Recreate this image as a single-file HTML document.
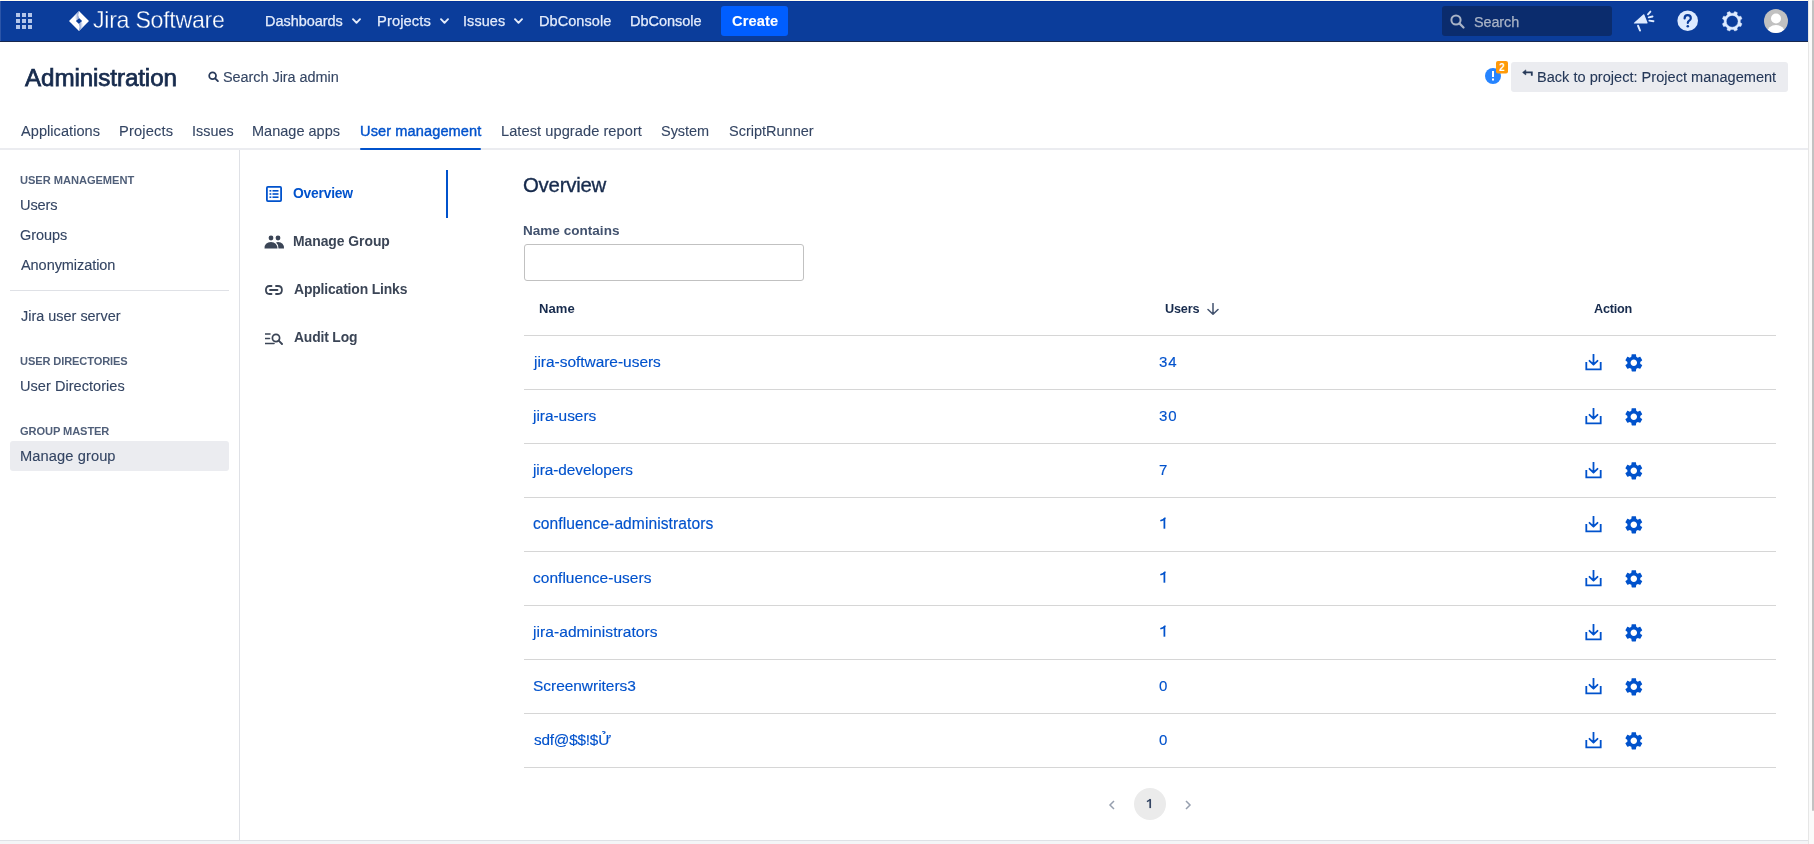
<!DOCTYPE html>
<html><head><meta charset="utf-8"><title>Jira Administration</title>
<style>
html,body{margin:0;padding:0;width:1814px;height:844px;overflow:hidden;background:#fff;}
body{position:relative;font-family:"Liberation Sans", sans-serif;}
.t{position:absolute;line-height:1;white-space:nowrap;will-change:transform;}
.r{position:absolute;display:block;}
</style></head><body>
<div class="r" style="left:0px;top:0px;width:1814px;height:1px;background:#FFFDF0;"></div>
<div class="r" style="left:1808px;top:0px;width:1px;height:844px;background:#E6E6E6;"></div>
<div class="r" style="left:1809px;top:0px;width:5px;height:844px;background:#FAFAFA;"></div>
<div class="r" style="left:1812px;top:0px;width:2px;height:811px;background:#C2C2C2;border-radius:1px"></div>
<div class="r" style="left:0px;top:1px;width:1808px;height:40px;background:#0B3D9B;"></div>
<div class="r" style="left:0px;top:1px;width:1808px;height:1px;background:#03339A;"></div>
<div class="r" style="left:0px;top:1px;width:1px;height:40px;background:#2C55A8;"></div>
<div class="r" style="left:0px;top:41px;width:1808px;height:1px;background:#18284E;"></div>
<svg class="r" style="left:16px;top:13px;" width="16" height="16" viewBox="0 0 16 16"><rect x="0" y="0" width="4" height="4" fill="#B4C6EA"/><rect x="0" y="6" width="4" height="4" fill="#B4C6EA"/><rect x="0" y="12" width="4" height="4" fill="#B4C6EA"/><rect x="6" y="0" width="4" height="4" fill="#B4C6EA"/><rect x="6" y="6" width="4" height="4" fill="#B4C6EA"/><rect x="6" y="12" width="4" height="4" fill="#B4C6EA"/><rect x="12" y="0" width="4" height="4" fill="#B4C6EA"/><rect x="12" y="6" width="4" height="4" fill="#B4C6EA"/><rect x="12" y="12" width="4" height="4" fill="#B4C6EA"/></svg>
<svg class="r" style="left:69px;top:10.8px;" width="20" height="20" viewBox="0 0 20 20"><defs><linearGradient id="lg1" gradientUnits="userSpaceOnUse" x1="9.4" y1="4" x2="4.6" y2="4"><stop offset="0" stop-color="#7D96CE"/><stop offset="1" stop-color="#FFFFFF" stop-opacity="0"/></linearGradient><linearGradient id="lg2" gradientUnits="userSpaceOnUse" x1="10.6" y1="16" x2="15.4" y2="16"><stop offset="0" stop-color="#7D96CE"/><stop offset="1" stop-color="#FFFFFF" stop-opacity="0"/></linearGradient></defs><path d="M10 0 L20 10 L10 20 L0 10 Z M10 6.9 L6.9 10 L10 13.1 L13.1 10 Z" fill="#fff" fill-rule="evenodd"/><path d="M10 0.2 Q8.6 3.5 9.9 6.9 L7.5 9.3 L4.6 5.4 Z" fill="url(#lg1)"/><path d="M10 19.8 Q11.4 16.5 10.1 13.1 L12.5 10.7 L15.4 14.6 Z" fill="url(#lg2)"/></svg>
<div class="t" style="left:93.30px;top:9.00px;font-size:23.2px;letter-spacing:-0.283px;color:#FFFFFF;font-weight:400;-webkit-text-stroke:0.3px #0B3D9B">Jira Software</div>
<div class="t" style="left:265.30px;top:14.00px;font-size:14.47px;letter-spacing:-0.033px;color:#E4ECFB;font-weight:400;-webkit-text-stroke:0.25px #E4ECFB">Dashboards</div>
<svg class="r" style="left:351.5px;top:17.5px;" width="9" height="7" viewBox="0 0 9 7"><path d="M1 1.2 L4.5 4.8 L8 1.2" fill="none" stroke="#E4ECFB" stroke-width="1.9" stroke-linecap="round" stroke-linejoin="round"/></svg>
<div class="t" style="left:376.70px;top:14.00px;font-size:14.73px;letter-spacing:0.086px;color:#E4ECFB;font-weight:400;-webkit-text-stroke:0.25px #E4ECFB">Projects</div>
<svg class="r" style="left:439.5px;top:17.5px;" width="9" height="7" viewBox="0 0 9 7"><path d="M1 1.2 L4.5 4.8 L8 1.2" fill="none" stroke="#E4ECFB" stroke-width="1.9" stroke-linecap="round" stroke-linejoin="round"/></svg>
<div class="t" style="left:463.30px;top:14.00px;font-size:14.41px;letter-spacing:0.1px;color:#E4ECFB;font-weight:400;-webkit-text-stroke:0.25px #E4ECFB">Issues</div>
<svg class="r" style="left:513.5px;top:17.5px;" width="9" height="7" viewBox="0 0 9 7"><path d="M1 1.2 L4.5 4.8 L8 1.2" fill="none" stroke="#E4ECFB" stroke-width="1.9" stroke-linecap="round" stroke-linejoin="round"/></svg>
<div class="t" style="left:538.50px;top:14.00px;font-size:14.54px;letter-spacing:0.05px;color:#E4ECFB;font-weight:400;-webkit-text-stroke:0.25px #E4ECFB">DbConsole</div>
<div class="t" style="left:629.70px;top:14.00px;font-size:14.55px;letter-spacing:-0.062px;color:#E4ECFB;font-weight:400;-webkit-text-stroke:0.25px #E4ECFB">DbConsole</div>
<div class="r" style="left:721px;top:6px;width:67px;height:30px;background:#005EFF;border-radius:3px"></div>
<div class="t" style="left:731.60px;top:14.00px;font-size:14.6px;letter-spacing:0.12px;color:#FFFFFF;font-weight:700;-webkit-text-stroke:0.1px #FFFFFF">Create</div>
<div class="r" style="left:1442px;top:6px;width:170px;height:30px;background:#0B2C6D;border-radius:3px"></div>
<svg class="r" style="left:1450px;top:14px;" width="15" height="15" viewBox="0 0 15 15"><circle cx="6" cy="6" r="4.6" fill="none" stroke="#A9B3C6" stroke-width="2"/><path d="M9.4 9.4 L13.5 13.5" stroke="#A9B3C6" stroke-width="2.2" stroke-linecap="round"/></svg>
<div class="t" style="left:1473.70px;top:15.00px;font-size:14.42px;letter-spacing:-0.1px;color:#A9B3C6;font-weight:400;-webkit-text-stroke:0.25px #A9B3C6">Search</div>
<svg class="r" style="left:1633px;top:10px;" width="22" height="22" viewBox="0 0 22 22"><path d="M1.6 12.3 L10.5 4.3 Q11 3.9 11.3 4.5 L14.6 12.8 Q14.8 13.5 14 13.5 L1.6 13.5 Q0.6 13.5 0.9 12.9 Z" fill="#DEEBFF"/><path d="M5.1 15.8 L7 20.5" stroke="#DEEBFF" stroke-width="2" stroke-linecap="round"/><path d="M15 4.4 L17.4 1.6 M15.7 7.4 L19.5 6.5 M16.4 10.6 L20.5 11.2" stroke="#DEEBFF" stroke-width="1.9" stroke-linecap="round"/></svg>
<svg class="r" style="left:1677px;top:10px;" width="22" height="22" viewBox="0 0 22 22"><circle cx="10.7" cy="10.8" r="10.3" fill="#DEEBFF"/><path d="M7.6 8.4 Q7.6 5.2 10.7 5.2 Q13.8 5.2 13.8 8.2 Q13.8 10 11.8 11 Q10.8 11.6 10.8 13" fill="none" stroke="#0B3D9B" stroke-width="2.2" stroke-linecap="round"/><circle cx="10.8" cy="16.3" r="1.3" fill="#0B3D9B"/></svg>
<svg class="r" style="left:1721.8px;top:10.7px;" width="21" height="21" viewBox="0 0 21 21"><path d="M18.30 11.57 L19.99 12.80 L18.89 15.45 L16.82 15.13 L15.03 16.92 L15.35 18.99 L12.70 20.09 L11.47 18.40 L8.93 18.40 L7.70 20.09 L5.05 18.99 L5.37 16.92 L3.58 15.13 L1.51 15.45 L0.41 12.80 L2.10 11.57 L2.10 9.03 L0.41 7.80 L1.51 5.15 L3.58 5.47 L5.37 3.68 L5.05 1.61 L7.70 0.51 L8.93 2.20 L11.47 2.20 L12.70 0.51 L15.35 1.61 L15.03 3.68 L16.82 5.47 L18.89 5.15 L19.99 7.80 L18.30 9.03 Z M10.2 4.4 A5.9 5.9 0 1 0 10.2 16.2 A5.9 5.9 0 1 0 10.2 4.4 Z" fill="#DEEBFF" fill-rule="evenodd" stroke="#DEEBFF" stroke-width="0.4" stroke-linejoin="round"/></svg>
<svg class="r" style="left:1764px;top:9px;" width="24" height="24" viewBox="0 0 24 24"><defs><clipPath id="avc"><circle cx="12" cy="12" r="12"/></clipPath></defs><circle cx="12" cy="12" r="12" fill="#C1C1C1"/><g clip-path="url(#avc)"><circle cx="12" cy="9.5" r="5" fill="#fff"/><ellipse cx="12" cy="24" rx="9" ry="8" fill="#fff"/></g></svg>
<div class="t" style="left:25.30px;top:66.00px;font-size:24.22px;letter-spacing:-0.115px;color:#172B4D;font-weight:400;-webkit-text-stroke:0.75px #172B4D">Administration</div>
<svg class="r" style="left:207.8px;top:71.2px;" width="12" height="12" viewBox="0 0 12 12"><circle cx="4.6" cy="4.8" r="3.4" fill="none" stroke="#283A5A" stroke-width="1.75"/><path d="M7.1 7.3 L9.9 10.1" stroke="#283A5A" stroke-width="1.9" stroke-linecap="round"/></svg>
<div class="t" style="left:223.00px;top:70.00px;font-size:14.46px;letter-spacing:-0.044px;color:#344563;font-weight:400;-webkit-text-stroke:0.12px #344563">Search Jira admin</div>
<svg class="r" style="left:1484px;top:60px;" width="25" height="26" viewBox="0 0 25 26"><circle cx="9" cy="16" r="8" fill="#2684FF"/><rect x="8" y="11" width="2" height="6" fill="#fff"/><rect x="8" y="18.5" width="2" height="2" fill="#fff"/><rect x="12" y="1" width="12" height="12.5" rx="2" fill="#FF9A0A"/><text x="18" y="11" font-family="Liberation Sans" font-size="10" font-weight="700" fill="#fff" text-anchor="middle">2</text></svg>
<div class="r" style="left:1511px;top:62px;width:277px;height:30px;background:#EBECF0;border-radius:3px"></div>
<svg class="r" style="left:1522px;top:69px;" width="12" height="8" viewBox="0 0 12 8"><path d="M2.5 3.4 L9.8 3.4 L9.8 6.8" fill="none" stroke="#253858" stroke-width="1.8"/><path d="M0.6 3.4 L3.8 0.9 L3.8 5.9 Z" fill="#253858" stroke="#253858" stroke-width="0.6" stroke-linejoin="round"/></svg>
<div class="t" style="left:1537.10px;top:70.00px;font-size:14.55px;letter-spacing:0.018px;color:#253858;font-weight:400;-webkit-text-stroke:0.1px #253858">Back to project: Project management</div>
<div class="r" style="left:0px;top:148px;width:1808px;height:2px;background:#EBECF0;"></div>
<div class="t" style="left:20.60px;top:124.00px;font-size:14.56px;letter-spacing:0.055px;color:#344563;font-weight:400;-webkit-text-stroke:0.1px #344563">Applications</div>
<div class="t" style="left:118.80px;top:124.00px;font-size:14.67px;letter-spacing:0.171px;color:#344563;font-weight:400;-webkit-text-stroke:0.1px #344563">Projects</div>
<div class="t" style="left:191.60px;top:124.00px;font-size:14.36px;letter-spacing:0.04px;color:#344563;font-weight:400;-webkit-text-stroke:0.1px #344563">Issues</div>
<div class="t" style="left:252.40px;top:124.00px;font-size:14.51px;letter-spacing:0.01px;color:#344563;font-weight:400;-webkit-text-stroke:0.1px #344563">Manage apps</div>
<div class="t" style="left:500.60px;top:124.00px;font-size:14.62px;letter-spacing:0.06px;color:#344563;font-weight:400;-webkit-text-stroke:0.1px #344563">Latest upgrade report</div>
<div class="t" style="left:661.40px;top:124.00px;font-size:14.48px;letter-spacing:-0.02px;color:#344563;font-weight:400;-webkit-text-stroke:0.1px #344563">System</div>
<div class="t" style="left:729.30px;top:124.00px;font-size:14.5px;letter-spacing:0.0px;color:#344563;font-weight:400;-webkit-text-stroke:0.1px #344563">ScriptRunner</div>
<div class="t" style="left:359.60px;top:124.00px;font-size:14.59px;letter-spacing:0.1px;color:#0052CC;font-weight:400;-webkit-text-stroke:0.4px #0052CC">User management</div>
<div class="r" style="left:360px;top:148px;width:121px;height:2px;background:#0052CC;border-radius:1px"></div>
<div class="r" style="left:239px;top:150px;width:1px;height:690px;background:#DFE1E6;"></div>
<div class="t" style="left:19.50px;top:175.00px;font-size:11.12px;letter-spacing:-0.043px;color:#505F79;font-weight:700;">USER MANAGEMENT</div>
<div class="t" style="left:19.50px;top:198.00px;font-size:14.6px;letter-spacing:-0.125px;color:#344563;font-weight:400;-webkit-text-stroke:0.12px #344563">Users</div>
<div class="t" style="left:19.50px;top:228.00px;font-size:14.48px;letter-spacing:-0.02px;color:#344563;font-weight:400;-webkit-text-stroke:0.12px #344563">Groups</div>
<div class="t" style="left:20.50px;top:258.00px;font-size:14.52px;letter-spacing:-0.067px;color:#344563;font-weight:400;-webkit-text-stroke:0.12px #344563">Anonymization</div>
<div class="r" style="left:10px;top:290px;width:219px;height:1px;background:#DFE1E6;"></div>
<div class="t" style="left:20.50px;top:309.00px;font-size:14.43px;letter-spacing:0.007px;color:#344563;font-weight:400;-webkit-text-stroke:0.12px #344563">Jira user server</div>
<div class="t" style="left:20.40px;top:356.00px;font-size:11.07px;letter-spacing:-0.1px;color:#505F79;font-weight:700;">USER DIRECTORIES</div>
<div class="t" style="left:20.40px;top:379.00px;font-size:14.54px;letter-spacing:0.04px;color:#344563;font-weight:400;-webkit-text-stroke:0.12px #344563">User Directories</div>
<div class="t" style="left:20.40px;top:426.00px;font-size:11.08px;letter-spacing:-0.082px;color:#505F79;font-weight:700;">GROUP MASTER</div>
<div class="r" style="left:10px;top:441px;width:219px;height:30px;background:#EBECF0;border-radius:3px"></div>
<div class="t" style="left:20.40px;top:449.00px;font-size:14.66px;letter-spacing:0.091px;color:#344563;font-weight:400;-webkit-text-stroke:0.12px #344563">Manage group</div>
<svg class="r" style="left:266px;top:186px;" width="16" height="16" viewBox="0 0 16 16"><rect x="0.9" y="0.9" width="14.2" height="14.2" rx="1" fill="none" stroke="#0052CC" stroke-width="1.8"/><rect x="3.5" y="4" width="1.8" height="1.6" fill="#0052CC"/><rect x="6.5" y="4" width="6" height="1.6" fill="#0052CC"/><rect x="3.5" y="7.2" width="1.8" height="1.6" fill="#0052CC"/><rect x="6.5" y="7.2" width="6" height="1.6" fill="#0052CC"/><rect x="3.5" y="10.4" width="1.8" height="1.6" fill="#0052CC"/><rect x="6.5" y="10.4" width="6" height="1.6" fill="#0052CC"/></svg>
<div class="t" style="left:292.50px;top:187.00px;font-size:13.84px;letter-spacing:-0.2px;color:#0052CC;font-weight:700;">Overview</div>
<div class="r" style="left:446px;top:170px;width:2px;height:48px;background:#0052CC;"></div>
<svg class="r" style="left:264px;top:235px;" width="21" height="14" viewBox="0 0 21 14"><circle cx="7" cy="3" r="2.4" fill="#3B4556"/><circle cx="14" cy="3" r="2.4" fill="#3B4556"/><path d="M0.5 13.5 Q0.5 7 7 7 Q13 7 13.5 13.5 Z" fill="#3B4556"/><path d="M12 7.6 Q13 7 14 7 Q20 7 20 13.5 L14.5 13.5 Q14.5 9.5 12 7.6 Z" fill="#3B4556"/></svg>
<div class="t" style="left:292.50px;top:235.00px;font-size:13.9px;letter-spacing:-0.036px;color:#3B4556;font-weight:700;">Manage Group</div>
<svg class="r" style="left:265px;top:285px;" width="18" height="11" viewBox="0 0 18 11"><path d="M6.5 1 L4.5 1 Q0.9 1 0.9 5 Q0.9 9 4.5 9 L6.5 9 M11 1 L13 1 Q16.9 1 16.9 5 Q16.9 9 13 9 L11 9 M5 5 L12.5 5" fill="none" stroke="#3B4556" stroke-width="1.8" stroke-linecap="round"/></svg>
<div class="t" style="left:293.50px;top:283.00px;font-size:13.91px;letter-spacing:-0.156px;color:#3B4556;font-weight:700;">Application Links</div>
<svg class="r" style="left:265px;top:333px;" width="19" height="12" viewBox="0 0 19 12"><path d="M0.5 1 L5 1 M0.5 5.5 L4.5 5.5 M0.5 10.5 L9 10.5" stroke="#3B4556" stroke-width="1.6" stroke-linecap="round"/><circle cx="11" cy="5" r="3.6" fill="none" stroke="#3B4556" stroke-width="1.7"/><path d="M13.7 7.7 L17 11" stroke="#3B4556" stroke-width="1.9" stroke-linecap="round"/></svg>
<div class="t" style="left:293.50px;top:331.00px;font-size:13.87px;letter-spacing:-0.15px;color:#3B4556;font-weight:700;">Audit Log</div>
<div class="t" style="left:523.00px;top:175.00px;font-size:20.41px;letter-spacing:-0.257px;color:#172B4D;font-weight:400;-webkit-text-stroke:0.35px #172B4D">Overview</div>
<div class="t" style="left:523.00px;top:224.00px;font-size:13.52px;letter-spacing:0.025px;color:#42526E;font-weight:700;">Name contains</div>
<div class="r" style="left:524px;top:244px;width:280px;height:37px;box-sizing:border-box;border:1px solid #C1C1C1;border-radius:3px;background:#fff"></div>
<div class="t" style="left:538.80px;top:302.00px;font-size:13.04px;letter-spacing:0.067px;color:#172B4D;font-weight:700;">Name</div>
<div class="t" style="left:1165.00px;top:303.00px;font-size:12.68px;letter-spacing:-0.175px;color:#172B4D;font-weight:700;">Users</div>
<svg class="r" style="left:1206px;top:303px;" width="14" height="12" viewBox="0 0 14 12"><path d="M7 0.5 L7 11 M2 6.5 L7 11.3 L12 6.5" fill="none" stroke="#42526E" stroke-width="1.5" stroke-linecap="round" stroke-linejoin="round"/></svg>
<div class="t" style="left:1594.00px;top:303.00px;font-size:12.65px;letter-spacing:-0.22px;color:#172B4D;font-weight:700;">Action</div>
<div class="r" style="left:524px;top:335px;width:1252px;height:1px;background:#D6D6D6;"></div>
<div class="t" style="left:533.50px;top:354.00px;font-size:15.48px;letter-spacing:-0.022px;color:#0052CC;font-weight:400;-webkit-text-stroke:0.15px #0052CC">jira-software-users</div>
<div class="t" style="left:1159.10px;top:354.00px;font-size:15px;letter-spacing:1.0px;color:#0052CC;-webkit-text-stroke:0.15px #0052CC">34</div>
<svg class="r" style="left:1585px;top:354px;" width="17" height="17" viewBox="0 0 17 17"><path d="M8.5 0.5 L8.5 10.5 M4.5 6.8 L8.5 10.7 L12.5 6.8" fill="none" stroke="#0052CC" stroke-width="1.8" stroke-linecap="round" stroke-linejoin="round"/><path d="M1.3 8 L1.3 15.3 L15.7 15.3 L15.7 8" fill="none" stroke="#0052CC" stroke-width="1.8"/></svg>
<svg class="r" style="left:1622.9px;top:351.6px" width="21.6" height="21.6" viewBox="0 0 24 24"><path fill="#0052CC" d="M19.14,12.94c0.04-0.3,0.06-0.61,0.06-0.94c0-0.32-0.02-0.64-0.07-0.94l2.03-1.58c0.18-0.14,0.23-0.41,0.12-0.61l-1.92-3.32c-0.12-0.22-0.37-0.29-0.59-0.22l-2.39,0.96c-0.5-0.38-1.03-0.7-1.62-0.94L14.4,2.81c-0.04-0.24-0.24-0.41-0.48-0.41h-3.84c-0.24,0-0.43,0.17-0.47,0.41L9.25,5.35C8.66,5.59,8.12,5.92,7.63,6.29L5.24,5.33c-0.22-0.08-0.47,0-0.59,0.22L2.74,8.87C2.62,9.08,2.66,9.34,2.86,9.48l2.03,1.58C4.84,11.36,4.8,11.69,4.8,12s0.02,0.64,0.07,0.94l-2.03,1.58c-0.18,0.14-0.23,0.41-0.12,0.61l1.92,3.32c0.12,0.22,0.37,0.29,0.59,0.22l2.39-0.96c0.5,0.38,1.03,0.7,1.62,0.94l0.36,2.54c0.05,0.24,0.24,0.41,0.48,0.41h3.84c0.24,0,0.44-0.17,0.47-0.41l0.36-2.54c0.59-0.24,1.13-0.56,1.62-0.94l2.39,0.96c0.22,0.08,0.47,0,0.59-0.22l1.92-3.32c0.12-0.22,0.07-0.47-0.12-0.61L19.14,12.94z M12,15.6c-1.98,0-3.6-1.62-3.6-3.6s1.62-3.6,3.6-3.6s3.6,1.62,3.6,3.6S13.98,15.6,12,15.6z"/></svg>
<div class="r" style="left:524px;top:389px;width:1252px;height:1px;background:#D6D6D6;"></div>
<div class="t" style="left:533.30px;top:408.00px;font-size:15.46px;letter-spacing:-0.033px;color:#0052CC;font-weight:400;-webkit-text-stroke:0.15px #0052CC">jira-users</div>
<div class="t" style="left:1159.10px;top:408.00px;font-size:15px;letter-spacing:1.0px;color:#0052CC;-webkit-text-stroke:0.15px #0052CC">30</div>
<svg class="r" style="left:1585px;top:408px;" width="17" height="17" viewBox="0 0 17 17"><path d="M8.5 0.5 L8.5 10.5 M4.5 6.8 L8.5 10.7 L12.5 6.8" fill="none" stroke="#0052CC" stroke-width="1.8" stroke-linecap="round" stroke-linejoin="round"/><path d="M1.3 8 L1.3 15.3 L15.7 15.3 L15.7 8" fill="none" stroke="#0052CC" stroke-width="1.8"/></svg>
<svg class="r" style="left:1622.9px;top:405.6px" width="21.6" height="21.6" viewBox="0 0 24 24"><path fill="#0052CC" d="M19.14,12.94c0.04-0.3,0.06-0.61,0.06-0.94c0-0.32-0.02-0.64-0.07-0.94l2.03-1.58c0.18-0.14,0.23-0.41,0.12-0.61l-1.92-3.32c-0.12-0.22-0.37-0.29-0.59-0.22l-2.39,0.96c-0.5-0.38-1.03-0.7-1.62-0.94L14.4,2.81c-0.04-0.24-0.24-0.41-0.48-0.41h-3.84c-0.24,0-0.43,0.17-0.47,0.41L9.25,5.35C8.66,5.59,8.12,5.92,7.63,6.29L5.24,5.33c-0.22-0.08-0.47,0-0.59,0.22L2.74,8.87C2.62,9.08,2.66,9.34,2.86,9.48l2.03,1.58C4.84,11.36,4.8,11.69,4.8,12s0.02,0.64,0.07,0.94l-2.03,1.58c-0.18,0.14-0.23,0.41-0.12,0.61l1.92,3.32c0.12,0.22,0.37,0.29,0.59,0.22l2.39-0.96c0.5,0.38,1.03,0.7,1.62,0.94l0.36,2.54c0.05,0.24,0.24,0.41,0.48,0.41h3.84c0.24,0,0.44-0.17,0.47-0.41l0.36-2.54c0.59-0.24,1.13-0.56,1.62-0.94l2.39,0.96c0.22,0.08,0.47,0,0.59-0.22l1.92-3.32c0.12-0.22,0.07-0.47-0.12-0.61L19.14,12.94z M12,15.6c-1.98,0-3.6-1.62-3.6-3.6s1.62-3.6,3.6-3.6s3.6,1.62,3.6,3.6S13.98,15.6,12,15.6z"/></svg>
<div class="r" style="left:524px;top:443px;width:1252px;height:1px;background:#D6D6D6;"></div>
<div class="t" style="left:533.30px;top:462.00px;font-size:15.36px;letter-spacing:-0.057px;color:#0052CC;font-weight:400;-webkit-text-stroke:0.15px #0052CC">jira-developers</div>
<div class="t" style="left:1159.10px;top:462.00px;font-size:15px;letter-spacing:1.0px;color:#0052CC;-webkit-text-stroke:0.15px #0052CC">7</div>
<svg class="r" style="left:1585px;top:462px;" width="17" height="17" viewBox="0 0 17 17"><path d="M8.5 0.5 L8.5 10.5 M4.5 6.8 L8.5 10.7 L12.5 6.8" fill="none" stroke="#0052CC" stroke-width="1.8" stroke-linecap="round" stroke-linejoin="round"/><path d="M1.3 8 L1.3 15.3 L15.7 15.3 L15.7 8" fill="none" stroke="#0052CC" stroke-width="1.8"/></svg>
<svg class="r" style="left:1622.9px;top:459.6px" width="21.6" height="21.6" viewBox="0 0 24 24"><path fill="#0052CC" d="M19.14,12.94c0.04-0.3,0.06-0.61,0.06-0.94c0-0.32-0.02-0.64-0.07-0.94l2.03-1.58c0.18-0.14,0.23-0.41,0.12-0.61l-1.92-3.32c-0.12-0.22-0.37-0.29-0.59-0.22l-2.39,0.96c-0.5-0.38-1.03-0.7-1.62-0.94L14.4,2.81c-0.04-0.24-0.24-0.41-0.48-0.41h-3.84c-0.24,0-0.43,0.17-0.47,0.41L9.25,5.35C8.66,5.59,8.12,5.92,7.63,6.29L5.24,5.33c-0.22-0.08-0.47,0-0.59,0.22L2.74,8.87C2.62,9.08,2.66,9.34,2.86,9.48l2.03,1.58C4.84,11.36,4.8,11.69,4.8,12s0.02,0.64,0.07,0.94l-2.03,1.58c-0.18,0.14-0.23,0.41-0.12,0.61l1.92,3.32c0.12,0.22,0.37,0.29,0.59,0.22l2.39-0.96c0.5,0.38,1.03,0.7,1.62,0.94l0.36,2.54c0.05,0.24,0.24,0.41,0.48,0.41h3.84c0.24,0,0.44-0.17,0.47-0.41l0.36-2.54c0.59-0.24,1.13-0.56,1.62-0.94l2.39,0.96c0.22,0.08,0.47,0,0.59-0.22l1.92-3.32c0.12-0.22,0.07-0.47-0.12-0.61L19.14,12.94z M12,15.6c-1.98,0-3.6-1.62-3.6-3.6s1.62-3.6,3.6-3.6s3.6,1.62,3.6,3.6S13.98,15.6,12,15.6z"/></svg>
<div class="r" style="left:524px;top:497px;width:1252px;height:1px;background:#D6D6D6;"></div>
<div class="t" style="left:532.60px;top:516.00px;font-size:15.61px;letter-spacing:0.062px;color:#0052CC;font-weight:400;-webkit-text-stroke:0.15px #0052CC">confluence-administrators</div>
<svg class="r" style="left:1159px;top:516px" width="8" height="14" viewBox="0 0 8 14"><path d="M5.4 2.3 L5.4 12.7" stroke="#0052CC" stroke-width="1.75"/><path d="M2 4.6 Q4.6 3.9 5.9 2.2" fill="none" stroke="#0052CC" stroke-width="1.6" stroke-linecap="round"/></svg>
<svg class="r" style="left:1585px;top:516px;" width="17" height="17" viewBox="0 0 17 17"><path d="M8.5 0.5 L8.5 10.5 M4.5 6.8 L8.5 10.7 L12.5 6.8" fill="none" stroke="#0052CC" stroke-width="1.8" stroke-linecap="round" stroke-linejoin="round"/><path d="M1.3 8 L1.3 15.3 L15.7 15.3 L15.7 8" fill="none" stroke="#0052CC" stroke-width="1.8"/></svg>
<svg class="r" style="left:1622.9px;top:513.6px" width="21.6" height="21.6" viewBox="0 0 24 24"><path fill="#0052CC" d="M19.14,12.94c0.04-0.3,0.06-0.61,0.06-0.94c0-0.32-0.02-0.64-0.07-0.94l2.03-1.58c0.18-0.14,0.23-0.41,0.12-0.61l-1.92-3.32c-0.12-0.22-0.37-0.29-0.59-0.22l-2.39,0.96c-0.5-0.38-1.03-0.7-1.62-0.94L14.4,2.81c-0.04-0.24-0.24-0.41-0.48-0.41h-3.84c-0.24,0-0.43,0.17-0.47,0.41L9.25,5.35C8.66,5.59,8.12,5.92,7.63,6.29L5.24,5.33c-0.22-0.08-0.47,0-0.59,0.22L2.74,8.87C2.62,9.08,2.66,9.34,2.86,9.48l2.03,1.58C4.84,11.36,4.8,11.69,4.8,12s0.02,0.64,0.07,0.94l-2.03,1.58c-0.18,0.14-0.23,0.41-0.12,0.61l1.92,3.32c0.12,0.22,0.37,0.29,0.59,0.22l2.39-0.96c0.5,0.38,1.03,0.7,1.62,0.94l0.36,2.54c0.05,0.24,0.24,0.41,0.48,0.41h3.84c0.24,0,0.44-0.17,0.47-0.41l0.36-2.54c0.59-0.24,1.13-0.56,1.62-0.94l2.39,0.96c0.22,0.08,0.47,0,0.59-0.22l1.92-3.32c0.12-0.22,0.07-0.47-0.12-0.61L19.14,12.94z M12,15.6c-1.98,0-3.6-1.62-3.6-3.6s1.62-3.6,3.6-3.6s3.6,1.62,3.6,3.6S13.98,15.6,12,15.6z"/></svg>
<div class="r" style="left:524px;top:551px;width:1252px;height:1px;background:#D6D6D6;"></div>
<div class="t" style="left:532.60px;top:570.00px;font-size:15.47px;letter-spacing:0.04px;color:#0052CC;font-weight:400;-webkit-text-stroke:0.15px #0052CC">confluence-users</div>
<svg class="r" style="left:1159px;top:570px" width="8" height="14" viewBox="0 0 8 14"><path d="M5.4 2.3 L5.4 12.7" stroke="#0052CC" stroke-width="1.75"/><path d="M2 4.6 Q4.6 3.9 5.9 2.2" fill="none" stroke="#0052CC" stroke-width="1.6" stroke-linecap="round"/></svg>
<svg class="r" style="left:1585px;top:570px;" width="17" height="17" viewBox="0 0 17 17"><path d="M8.5 0.5 L8.5 10.5 M4.5 6.8 L8.5 10.7 L12.5 6.8" fill="none" stroke="#0052CC" stroke-width="1.8" stroke-linecap="round" stroke-linejoin="round"/><path d="M1.3 8 L1.3 15.3 L15.7 15.3 L15.7 8" fill="none" stroke="#0052CC" stroke-width="1.8"/></svg>
<svg class="r" style="left:1622.9px;top:567.6px" width="21.6" height="21.6" viewBox="0 0 24 24"><path fill="#0052CC" d="M19.14,12.94c0.04-0.3,0.06-0.61,0.06-0.94c0-0.32-0.02-0.64-0.07-0.94l2.03-1.58c0.18-0.14,0.23-0.41,0.12-0.61l-1.92-3.32c-0.12-0.22-0.37-0.29-0.59-0.22l-2.39,0.96c-0.5-0.38-1.03-0.7-1.62-0.94L14.4,2.81c-0.04-0.24-0.24-0.41-0.48-0.41h-3.84c-0.24,0-0.43,0.17-0.47,0.41L9.25,5.35C8.66,5.59,8.12,5.92,7.63,6.29L5.24,5.33c-0.22-0.08-0.47,0-0.59,0.22L2.74,8.87C2.62,9.08,2.66,9.34,2.86,9.48l2.03,1.58C4.84,11.36,4.8,11.69,4.8,12s0.02,0.64,0.07,0.94l-2.03,1.58c-0.18,0.14-0.23,0.41-0.12,0.61l1.92,3.32c0.12,0.22,0.37,0.29,0.59,0.22l2.39-0.96c0.5,0.38,1.03,0.7,1.62,0.94l0.36,2.54c0.05,0.24,0.24,0.41,0.48,0.41h3.84c0.24,0,0.44-0.17,0.47-0.41l0.36-2.54c0.59-0.24,1.13-0.56,1.62-0.94l2.39,0.96c0.22,0.08,0.47,0,0.59-0.22l1.92-3.32c0.12-0.22,0.07-0.47-0.12-0.61L19.14,12.94z M12,15.6c-1.98,0-3.6-1.62-3.6-3.6s1.62-3.6,3.6-3.6s3.6,1.62,3.6,3.6S13.98,15.6,12,15.6z"/></svg>
<div class="r" style="left:524px;top:605px;width:1252px;height:1px;background:#D6D6D6;"></div>
<div class="t" style="left:533.30px;top:624.00px;font-size:15.56px;letter-spacing:0.056px;color:#0052CC;font-weight:400;-webkit-text-stroke:0.15px #0052CC">jira-administrators</div>
<svg class="r" style="left:1159px;top:624px" width="8" height="14" viewBox="0 0 8 14"><path d="M5.4 2.3 L5.4 12.7" stroke="#0052CC" stroke-width="1.75"/><path d="M2 4.6 Q4.6 3.9 5.9 2.2" fill="none" stroke="#0052CC" stroke-width="1.6" stroke-linecap="round"/></svg>
<svg class="r" style="left:1585px;top:624px;" width="17" height="17" viewBox="0 0 17 17"><path d="M8.5 0.5 L8.5 10.5 M4.5 6.8 L8.5 10.7 L12.5 6.8" fill="none" stroke="#0052CC" stroke-width="1.8" stroke-linecap="round" stroke-linejoin="round"/><path d="M1.3 8 L1.3 15.3 L15.7 15.3 L15.7 8" fill="none" stroke="#0052CC" stroke-width="1.8"/></svg>
<svg class="r" style="left:1622.9px;top:621.6px" width="21.6" height="21.6" viewBox="0 0 24 24"><path fill="#0052CC" d="M19.14,12.94c0.04-0.3,0.06-0.61,0.06-0.94c0-0.32-0.02-0.64-0.07-0.94l2.03-1.58c0.18-0.14,0.23-0.41,0.12-0.61l-1.92-3.32c-0.12-0.22-0.37-0.29-0.59-0.22l-2.39,0.96c-0.5-0.38-1.03-0.7-1.62-0.94L14.4,2.81c-0.04-0.24-0.24-0.41-0.48-0.41h-3.84c-0.24,0-0.43,0.17-0.47,0.41L9.25,5.35C8.66,5.59,8.12,5.92,7.63,6.29L5.24,5.33c-0.22-0.08-0.47,0-0.59,0.22L2.74,8.87C2.62,9.08,2.66,9.34,2.86,9.48l2.03,1.58C4.84,11.36,4.8,11.69,4.8,12s0.02,0.64,0.07,0.94l-2.03,1.58c-0.18,0.14-0.23,0.41-0.12,0.61l1.92,3.32c0.12,0.22,0.37,0.29,0.59,0.22l2.39-0.96c0.5,0.38,1.03,0.7,1.62,0.94l0.36,2.54c0.05,0.24,0.24,0.41,0.48,0.41h3.84c0.24,0,0.44-0.17,0.47-0.41l0.36-2.54c0.59-0.24,1.13-0.56,1.62-0.94l2.39,0.96c0.22,0.08,0.47,0,0.59-0.22l1.92-3.32c0.12-0.22,0.07-0.47-0.12-0.61L19.14,12.94z M12,15.6c-1.98,0-3.6-1.62-3.6-3.6s1.62-3.6,3.6-3.6s3.6,1.62,3.6,3.6S13.98,15.6,12,15.6z"/></svg>
<div class="r" style="left:524px;top:659px;width:1252px;height:1px;background:#D6D6D6;"></div>
<div class="t" style="left:532.60px;top:678.00px;font-size:15.48px;letter-spacing:-0.023px;color:#0052CC;font-weight:400;-webkit-text-stroke:0.15px #0052CC">Screenwriters3</div>
<div class="t" style="left:1159.10px;top:678.00px;font-size:15px;letter-spacing:1.0px;color:#0052CC;-webkit-text-stroke:0.15px #0052CC">0</div>
<svg class="r" style="left:1585px;top:678px;" width="17" height="17" viewBox="0 0 17 17"><path d="M8.5 0.5 L8.5 10.5 M4.5 6.8 L8.5 10.7 L12.5 6.8" fill="none" stroke="#0052CC" stroke-width="1.8" stroke-linecap="round" stroke-linejoin="round"/><path d="M1.3 8 L1.3 15.3 L15.7 15.3 L15.7 8" fill="none" stroke="#0052CC" stroke-width="1.8"/></svg>
<svg class="r" style="left:1622.9px;top:675.6px" width="21.6" height="21.6" viewBox="0 0 24 24"><path fill="#0052CC" d="M19.14,12.94c0.04-0.3,0.06-0.61,0.06-0.94c0-0.32-0.02-0.64-0.07-0.94l2.03-1.58c0.18-0.14,0.23-0.41,0.12-0.61l-1.92-3.32c-0.12-0.22-0.37-0.29-0.59-0.22l-2.39,0.96c-0.5-0.38-1.03-0.7-1.62-0.94L14.4,2.81c-0.04-0.24-0.24-0.41-0.48-0.41h-3.84c-0.24,0-0.43,0.17-0.47,0.41L9.25,5.35C8.66,5.59,8.12,5.92,7.63,6.29L5.24,5.33c-0.22-0.08-0.47,0-0.59,0.22L2.74,8.87C2.62,9.08,2.66,9.34,2.86,9.48l2.03,1.58C4.84,11.36,4.8,11.69,4.8,12s0.02,0.64,0.07,0.94l-2.03,1.58c-0.18,0.14-0.23,0.41-0.12,0.61l1.92,3.32c0.12,0.22,0.37,0.29,0.59,0.22l2.39-0.96c0.5,0.38,1.03,0.7,1.62,0.94l0.36,2.54c0.05,0.24,0.24,0.41,0.48,0.41h3.84c0.24,0,0.44-0.17,0.47-0.41l0.36-2.54c0.59-0.24,1.13-0.56,1.62-0.94l2.39,0.96c0.22,0.08,0.47,0,0.59-0.22l1.92-3.32c0.12-0.22,0.07-0.47-0.12-0.61L19.14,12.94z M12,15.6c-1.98,0-3.6-1.62-3.6-3.6s1.62-3.6,3.6-3.6s3.6,1.62,3.6,3.6S13.98,15.6,12,15.6z"/></svg>
<div class="r" style="left:524px;top:713px;width:1252px;height:1px;background:#D6D6D6;"></div>
<div class="t" style="left:533.60px;top:732.00px;font-size:15.33px;letter-spacing:-0.213px;color:#0052CC;font-weight:400;-webkit-text-stroke:0.15px #0052CC">sdf@$$!$Ử</div>
<div class="t" style="left:1159.10px;top:732.00px;font-size:15px;letter-spacing:1.0px;color:#0052CC;-webkit-text-stroke:0.15px #0052CC">0</div>
<svg class="r" style="left:1585px;top:732px;" width="17" height="17" viewBox="0 0 17 17"><path d="M8.5 0.5 L8.5 10.5 M4.5 6.8 L8.5 10.7 L12.5 6.8" fill="none" stroke="#0052CC" stroke-width="1.8" stroke-linecap="round" stroke-linejoin="round"/><path d="M1.3 8 L1.3 15.3 L15.7 15.3 L15.7 8" fill="none" stroke="#0052CC" stroke-width="1.8"/></svg>
<svg class="r" style="left:1622.9px;top:729.6px" width="21.6" height="21.6" viewBox="0 0 24 24"><path fill="#0052CC" d="M19.14,12.94c0.04-0.3,0.06-0.61,0.06-0.94c0-0.32-0.02-0.64-0.07-0.94l2.03-1.58c0.18-0.14,0.23-0.41,0.12-0.61l-1.92-3.32c-0.12-0.22-0.37-0.29-0.59-0.22l-2.39,0.96c-0.5-0.38-1.03-0.7-1.62-0.94L14.4,2.81c-0.04-0.24-0.24-0.41-0.48-0.41h-3.84c-0.24,0-0.43,0.17-0.47,0.41L9.25,5.35C8.66,5.59,8.12,5.92,7.63,6.29L5.24,5.33c-0.22-0.08-0.47,0-0.59,0.22L2.74,8.87C2.62,9.08,2.66,9.34,2.86,9.48l2.03,1.58C4.84,11.36,4.8,11.69,4.8,12s0.02,0.64,0.07,0.94l-2.03,1.58c-0.18,0.14-0.23,0.41-0.12,0.61l1.92,3.32c0.12,0.22,0.37,0.29,0.59,0.22l2.39-0.96c0.5,0.38,1.03,0.7,1.62,0.94l0.36,2.54c0.05,0.24,0.24,0.41,0.48,0.41h3.84c0.24,0,0.44-0.17,0.47-0.41l0.36-2.54c0.59-0.24,1.13-0.56,1.62-0.94l2.39,0.96c0.22,0.08,0.47,0,0.59-0.22l1.92-3.32c0.12-0.22,0.07-0.47-0.12-0.61L19.14,12.94z M12,15.6c-1.98,0-3.6-1.62-3.6-3.6s1.62-3.6,3.6-3.6s3.6,1.62,3.6,3.6S13.98,15.6,12,15.6z"/></svg>
<div class="r" style="left:524px;top:767px;width:1252px;height:1px;background:#D6D6D6;"></div>
<div class="r" style="left:1134px;top:788px;width:32px;height:32px;border-radius:50%;background:#EBEBEB"></div>
<svg class="r" style="left:1145px;top:798px;" width="8" height="12" viewBox="0 0 8 12"><path d="M5.2 1.4 L5.2 10.1" stroke="#344563" stroke-width="1.7"/><path d="M1.9 3.6 Q4.6 2.6 5.6 1.3" fill="none" stroke="#344563" stroke-width="1.5"/></svg>
<svg class="r" style="left:1108px;top:800px;" width="8" height="10" viewBox="0 0 8 10"><path d="M6 1 L2 5 L6 9" fill="none" stroke="#97A0AF" stroke-width="1.5"/></svg>
<svg class="r" style="left:1184px;top:800px;" width="8" height="10" viewBox="0 0 8 10"><path d="M2 1 L6 5 L2 9" fill="none" stroke="#97A0AF" stroke-width="1.5"/></svg>
<div class="r" style="left:0px;top:840px;width:1808px;height:1px;background:#DFE1E6;"></div>
<div class="r" style="left:0px;top:841px;width:1808px;height:3px;background:#F4F5F7;"></div>
</body></html>
